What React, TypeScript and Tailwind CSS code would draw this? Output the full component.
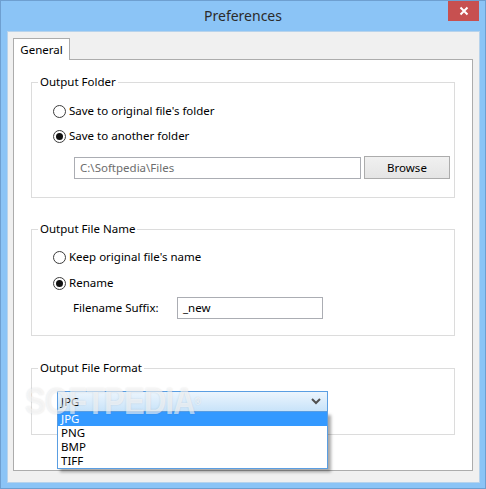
import React from "react";

function Radio({ checked, label }: { checked?: boolean; label: string }) {
  return (
    <div className="flex items-center h-[16px] leading-[16px]">
      <svg width="13" height="13" viewBox="0 0 13 13" className="shrink-0">
        <circle cx="6.5" cy="6.5" r="6" fill="#ffffff" stroke="#3c3c3c" strokeWidth="1" />
        {checked && <circle cx="6.5" cy="6.5" r="3.5" fill="#111111" />}
      </svg>
      <span className="ml-[3px] text-[#000]">{label}</span>
    </div>
  );
}

function Group({ title, className, children }: { title: string; className?: string; children: React.ReactNode }) {
  return (
    <div className={"relative w-[424px] border border-[#dcdcdc] " + (className ?? "")}>
      <span className="absolute -top-[9px] left-[6px] bg-white px-[2px] leading-[16px] text-[#000]">{title}</span>
      {children}
    </div>
  );
}

export default function App() {
  return (
    <div
      className="w-[486px] h-[489px] border border-[#6e9fd0] bg-[#8bc4f6] flex flex-col text-[11.5px]"
      style={{ fontFamily: '"Noto Sans", "Segoe UI", sans-serif' }}
    >
      {/* Title bar */}
      <div className="relative h-[30px] flex items-center justify-center">
        <span className="text-[14px] text-[#2b2b2b] leading-[20px]">Preferences</span>
        <div className="absolute top-0 right-[6px] w-[31px] h-[20px] bg-[#c75050] flex items-center justify-center">
          <svg width="10" height="10" viewBox="0 0 10 10">
            <path d="M1.5 1.5 L8.5 8.5 M8.5 1.5 L1.5 8.5" stroke="#ffffff" strokeWidth="2" />
          </svg>
        </div>
      </div>

      {/* Content */}
      <div className="ml-[6px] w-[473px] h-[452px] border border-[#b7d3ec] bg-[#f0f0f0] pt-[6px] pl-[5px] pr-[6px] pb-[11px] flex flex-col">
        <div className="relative z-10 -mb-px w-[57px] h-[22px] border border-b-0 border-[#acacac] bg-white flex items-center justify-center text-[#000] leading-[16px]">
          General
        </div>
        <div className="relative flex-1 border border-[#acacac] bg-white pl-[17px]">
          {/* Output Folder */}
          <Group title="Output Folder" className="mt-[22px] pt-[20px] pb-[18px]">
            <div className="pl-[21px] flex flex-col">
              <Radio label="Save to original file's folder" />
              <div className="h-[9px]" />
              <Radio checked label="Save to another folder" />
            </div>
            <div className="mt-[12px] pl-[42px] flex items-center h-[23px]">
              <div className="w-[287px] h-[22px] border border-[#abadb3] bg-white flex items-center pl-[5px] text-[#6d6d6d] leading-[16px]">
                C:\Softpedia\Files
              </div>
              <div className="ml-[3px] w-[86px] h-[23px] border border-[#acacac] bg-gradient-to-b from-[#f0f0f0] to-[#e5e5e5] flex items-center justify-center text-[#000] leading-[16px]">
                Browse
              </div>
            </div>
          </Group>

          {/* Output File Name */}
          <Group title="Output File Name" className="mt-[31px] pt-[19px] pb-[16px]">
            <div className="pl-[21px] flex flex-col">
              <Radio label="Keep original file's name" />
              <div className="h-[10px]" />
              <Radio checked label="Rename" />
            </div>
            <div className="mt-[6px] pl-[41px] flex items-center h-[22px]">
              <span className="w-[104px] text-[#000] leading-[16px]">Filename Suffix:</span>
              <div className="w-[146px] h-[22px] border border-[#abadb3] bg-white flex items-center pl-[5px] text-[#000] leading-[16px]">
                _new
              </div>
            </div>
          </Group>

          {/* Output File Format */}
          <Group title="Output File Format" className="mt-[32px] pt-[22px] pb-[22px]">
            <div className="relative ml-[25px] w-[271px] h-[21px]">
              <div className="w-full h-full border border-[#5a9ee2] bg-gradient-to-b from-[#ecf5fd] to-[#c8e3f9] flex items-center pl-[3px] pr-[6px] text-[#000] leading-[16px]">
                <span className="flex-1">JPG</span>
                <svg width="10" height="7" viewBox="0 0 10 7">
                  <path d="M1 1 L5 5 L9 1" stroke="#505050" strokeWidth="2" fill="none" />
                </svg>
              </div>
              <div className="absolute left-0 top-full z-20 w-[271px] border border-t-0 border-[#5a9ee2] bg-white shadow-[3px_3px_3px_rgba(0,0,0,0.35)] leading-[14px] text-[#000]">
                <div className="h-[14px] bg-[#3399ff] text-white pl-[3px]">JPG</div>
                <div className="h-[14px] pl-[3px]">PNG</div>
                <div className="h-[14px] pl-[3px]">BMP</div>
                <div className="h-[14px] pl-[3px]">TIFF</div>
              </div>
            </div>
          </Group>

          {/* Watermark */}
          <div
            className="pointer-events-none absolute left-[11px] top-[324px] z-30 origin-left scale-x-[0.86] text-[36px] font-bold leading-[36px] tracking-[-1px] text-white/60"
            style={{ fontFamily: '"Liberation Sans", sans-serif', textShadow: "0 0 2px rgba(0,0,0,0.12)" }}
          >
            SOFTPEDIA<span className="text-[10px] align-top">®</span>
          </div>
        </div>
      </div>
    </div>
  );
}
